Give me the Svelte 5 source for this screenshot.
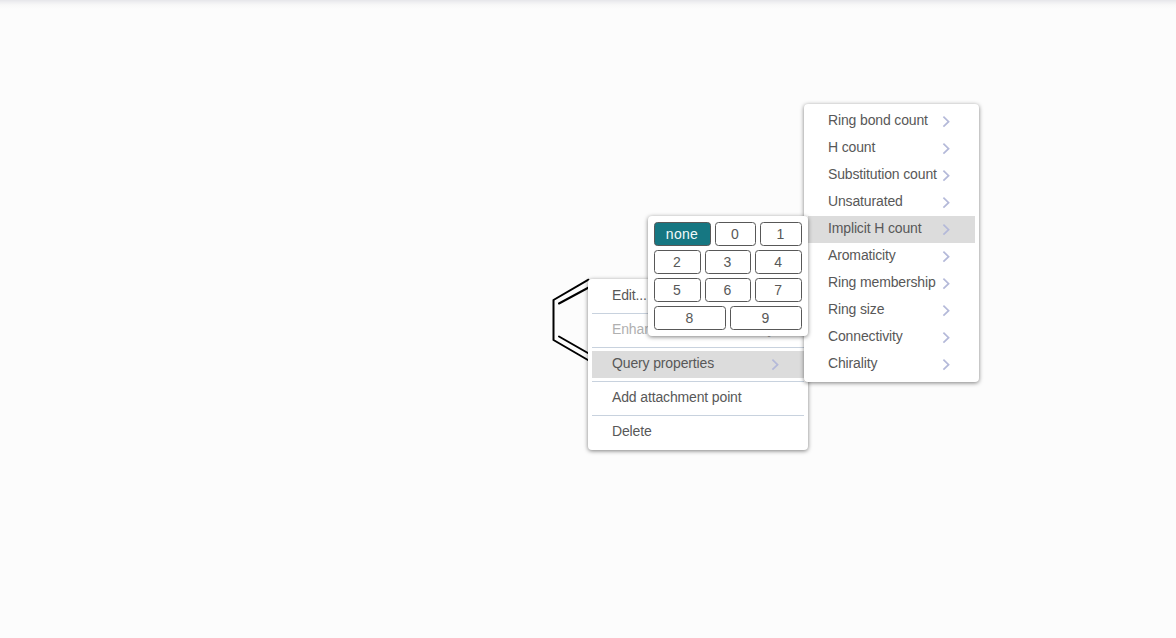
<script>
  const properties = [
    'Ring bond count', 'H count', 'Substitution count', 'Unsaturated', 'Implicit H count',
    'Aromaticity', 'Ring membership', 'Ring size', 'Connectivity', 'Chirality'
  ];
  const counts = [['none', '0', '1'], ['2', '3', '4'], ['5', '6', '7'], ['8', '9']];
</script>

{#snippet chevron()}
  <svg class="chevron" width="8" height="12" viewBox="0 0 8 12"><path d="M1.4 .7 L6.6 5.7 L1.4 10.7" /></svg>
{/snippet}

<main class="canvas">
  <svg class="molecule" width="80" height="100" viewBox="0 0 80 100">
    <path d="M48.5 14.7 L13.5 35 V75 L50.5 96.5 M50.5 21.5 L19 38.5 M19 71.5 L50.5 89.5" />
  </svg>

  <div class="menu atom">
    <div class="item"><span>Edit...</span></div>
    <hr />
    <div class="item disabled"><span>Enhanced stereochemistry...</span></div>
    <hr />
    <div class="item active"><span>Query properties</span>{@render chevron()}</div>
    <hr />
    <div class="item"><span>Add attachment point</span></div>
    <hr />
    <div class="item"><span>Delete</span></div>
  </div>

  <div class="menu query">
    {#each properties as name}
      <div class="item" class:active={name === 'Implicit H count'}><span>{name}</span>{@render chevron()}</div>
    {/each}
  </div>

  <div class="menu counts">
    {#each counts as row}
      <div class="row">
        {#each row as value}
          <button class:selected={value === 'none'} class:zero={value === '0'}>{value}</button>
        {/each}
      </div>
    {/each}
  </div>
</main>

<style>
  .canvas {
    position: relative;
    width: 100%;
    height: 100vh;
    overflow: hidden;
    background: linear-gradient(#e6e6ea 0, #f0f0f2 2.5px, #f8f8f8 5px, #fcfcfc 9px, #fcfcfc 100%);
    color: #585858;
    font: 14px/17px "Nimbus Sans", "Liberation Sans", Arial, sans-serif;
    letter-spacing: -0.14px;
  }
  .molecule {
    position: absolute;
    left: 540px;
    top: 265px;
    fill: none;
    stroke: #000;
    stroke-width: 2;
    stroke-linecap: round;
    stroke-linejoin: round;
  }
  .menu {
    position: absolute;
    box-sizing: border-box;
    padding: 4px;
    border-radius: 4px;
    background: #fff;
    box-shadow: 0 1px 4px rgba(0, 0, 0, 0.5);
  }
  .atom { left: 588px; top: 279px; width: 220px; }
  .query { left: 804px; top: 104px; width: 175px; }
  .item {
    display: flex;
    align-items: center;
    justify-content: space-between;
    box-sizing: border-box;
    height: 27px;
    padding: 0 25px 0 20px;
    white-space: nowrap;
  }
  .item span { padding-bottom: 2px; }
  .active { background: #dcdcdc; }
  .disabled { color: #b0b0b0; }
  .chevron {
    flex: none;
    align-self: flex-start;
    margin-top: 8px;
    fill: none;
    stroke: #b4b9d9;
    stroke-width: 1.7;
  }
  hr { height: 1px; margin: 3px 0; border: 0; background: #c8d2de; }
  .counts {
    left: 648px;
    top: 216px;
    width: 160px;
    display: flex;
    flex-direction: column;
    gap: 4px;
    padding: 6px;
  }
  .row { display: flex; gap: 4px; }
  button {
    flex: 1 1 0;
    height: 24px;
    box-sizing: border-box;
    padding: 0 1px 0 0;
    border: 1px solid #585858;
    border-radius: 3.5px;
    background: #fff;
    color: #585858;
    font: 14px/20px "Liberation Sans", Arial, sans-serif;
    letter-spacing: 0;
  }
  .selected {
    flex: 0 0 57px;
    background: #167782;
    color: #f2fafa;
    letter-spacing: 0.3px;
  }
  .zero { flex: 0 0 41px; }
</style>
